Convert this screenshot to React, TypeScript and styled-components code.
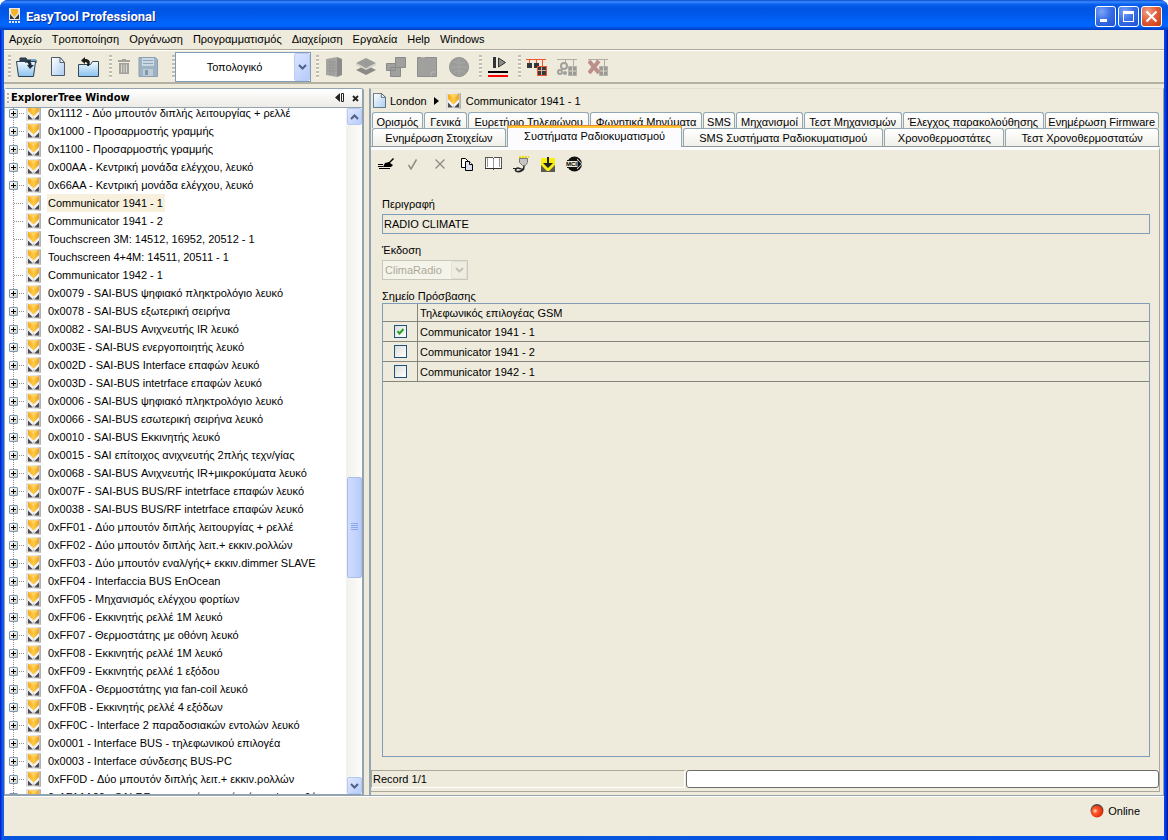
import React from "react";
import styled, { createGlobalStyle, css } from "styled-components";

const face = "#eeebdc";
const steel = "#93a3b0";
const ink = "#000";

const GlobalStyle = createGlobalStyle`
  *, *::before, *::after { box-sizing: border-box; }
  html, body { margin: 0; padding: 0; }
  body, button, input, select, table {
    font-family: "Liberation Sans", "DejaVu Sans Condensed", sans-serif;
    font-size: 11px;
    line-height: 16px;
    color: ${ink};
  }
  button { border: 0; padding: 0; background: none; }
`;

/* ---------- window ---------- */

const Window = styled.div`
  display: flex;
  flex-direction: column;
  height: 100vh;
  min-height: 480px;
  overflow: hidden;
  background: linear-gradient(90deg, #0019cf 0, #0831d9 1px, #166aee 3px, #0855dd 4px, #0855dd 50%, #0050ee calc(100% - 4px), #0831d9 calc(100% - 2px), #00138c 100%);
  border-radius: 8px 8px 0 0;
`;

const TitleBar = styled.header`
  display: flex;
  align-items: center;
  gap: 5px;
  flex: none;
  height: 30px;
  padding: 2px 6px 0 8px;
  background: linear-gradient(180deg, #0a4bd0 0, #3a8cff 2px, #0a62ee 4px, #0054e3 8px, #0058e8 14px, #0064fb 22px, #0066ff 26px, #0050dc 28px, #003cc4 30px);
`;

const Title = styled.h1`
  flex: 1;
  margin: 0;
  padding-top: 2px;
  font: bold 13px/18px Roboto, "Noto Sans", sans-serif;
  color: #fff;
  text-shadow: 1px 1px 0 #0a2a90;
`;

const Caption = styled.div`
  display: flex;
  gap: 2px;
`;

const CaptionButton = styled.button<{ $danger?: boolean }>`
  display: grid;
  place-items: center;
  width: 21px;
  height: 21px;
  border: 1px solid #fff;
  border-radius: 3px;
  background: ${(p) =>
    p.$danger
      ? "radial-gradient(circle at 30% 25%, #f0a088 0, #e2603c 45%, #c8380f 100%)"
      : "radial-gradient(circle at 30% 25%, #7da5f5 0, #3a6fe8 45%, #1c4fd0 100%)"};
`;

const Client = styled.div`
  display: flex;
  flex-direction: column;
  flex: 1;
  min-height: 0;
  margin: 0 4px 4px;
  background: ${face};
`;

/* ---------- menu and main tool bar ---------- */

const MenuBar = styled.nav`
  display: flex;
  flex: none;
  height: 20px;
  padding-left: 5px;
  gap: 10px;
  border-bottom: 1px solid #aca899;
`;

const MenuItem = styled.button`
  height: 18px;
  line-height: 18px;
  white-space: nowrap;
`;

const ToolBar = styled.div`
  display: flex;
  align-items: center;
  flex: none;
  gap: 5px;
  height: 34px;
  padding: 0 4px;
  border-top: 1px solid #fff;
  border-bottom: 2px solid #b4b1a2;
`;

const Group = styled.div<{ $end?: number }>`
  display: flex;
  align-items: center;
  padding-right: ${(p) => p.$end ?? 0}px;
  &::before {
    content: "";
    width: 3px;
    height: 23px;
    background: repeating-linear-gradient(180deg, #c2beae 0, #c2beae 2px, #fbfaf4 2px, #fbfaf4 3px, transparent 3px, transparent 4px);
  }
`;

const ToolButton = styled.button<{ $w?: number }>`
  display: grid;
  place-items: center;
  width: ${(p) => p.$w ?? 31}px;
  height: 26px;
  svg { display: block; }
`;

const ViewPicker = styled.div`
  position: relative;
  width: 136px;
  height: 30px;
`;

const ViewSelect = styled.select`
  appearance: none;
  width: 100%;
  height: 100%;
  padding: 0 17px 0 0;
  border: 1px solid #7f9db9;
  border-radius: 0;
  background: #fff;
  text-align-last: center;
`;

const DropMark = styled.span<{ $off?: boolean }>`
  position: absolute;
  top: 1px;
  right: 1px;
  bottom: 1px;
  width: 16px;
  display: grid;
  place-items: center;
  pointer-events: none;
  border: 1px solid ${(p) => (p.$off ? "#e4e2d6" : "#bccbf6")};
  border-radius: 2px;
  background: ${(p) => (p.$off ? "#efede2" : "linear-gradient(135deg, #dbe5fe, #b6cafb)")};
`;

/* ---------- workspace ---------- */

const Workspace = styled.main`
  display: grid;
  grid-template-columns: 360px minmax(0, 1fr);
  grid-template-rows: minmax(0, 1fr);
  column-gap: 5px;
  flex: 1;
  min-height: 0;
  padding-top: 4px;
  border-bottom: 1px solid ${steel};
`;

const Explorer = styled.section`
  display: flex;
  flex-direction: column;
  min-height: 0;
  border: 1px solid ${steel};
  border-right-width: 2px;
  border-radius: 3px 3px 0 0;
  background: #fff;
`;

const ExplorerHeader = styled.div`
  display: flex;
  align-items: center;
  flex: none;
  gap: 8px;
  height: 19px;
  padding: 0 3px 0 2px;
  border-bottom: 1px solid ${steel};
  background: linear-gradient(180deg, #fff, #ecebe6);
  &::before {
    content: "";
    width: 2px;
    height: 11px;
    margin-right: -6px;
    background: repeating-linear-gradient(180deg, #b5b2a5 0, #b5b2a5 2px, transparent 2px, transparent 4px);
  }
`;

const ExplorerTitle = styled.h2`
  flex: 1;
  margin: 0;
  font: bold 11px/16px "DejaVu Sans Condensed", "Noto Sans", sans-serif;
`;

const ExplorerBody = styled.div`
  display: grid;
  grid-template-columns: minmax(0, 1fr) 16px;
  flex: 1;
  min-height: 0;
`;

const TreeView = styled.div`
  overflow: hidden;
  min-height: 0;
`;

const Tree = styled.ul`
  list-style: none;
  margin: -4px 0 0;
  padding: 0 0 0 4px;
`;

const Node = styled.li`
  display: grid;
  grid-template-columns: 9px 8px 16px 1fr;
  align-items: center;
  height: 18px;
  background: repeating-linear-gradient(180deg, #8c8c8c 0, #8c8c8c 1px, transparent 1px, transparent 2px) 4px 0 / 1px 18px no-repeat;
`;

const Expander = styled.button`
  display: grid;
  place-items: center;
  width: 9px;
  height: 9px;
  border: 1px solid #7898b5;
  border-radius: 1px;
  background: linear-gradient(135deg, #fff, #d2cdbd);
`;

const Twig = styled.span<{ $leaf?: boolean }>`
  height: 1px;
  margin: 0 2px 0 1px;
  background: repeating-linear-gradient(90deg, #8c8c8c 0, #8c8c8c 1px, transparent 1px, transparent 2px);
  ${(p) =>
    p.$leaf &&
    css`
      grid-column: 1 / 3;
      margin-left: 5px;
    `}
`;

const NodeLabel = styled.span<{ $current?: boolean }>`
  justify-self: start;
  margin-left: 5px;
  padding: 1px 2px 1px 1px;
  white-space: nowrap;
  background: ${(p) => (p.$current ? "#f6f0dd" : "transparent")};
`;

const ScrollBar = styled.div`
  display: flex;
  flex-direction: column;
  min-height: 0;
  background: linear-gradient(90deg, #f1f0ea, #fdfdfb);
`;

const ScrollButton = styled.button`
  display: grid;
  place-items: center;
  flex: none;
  width: 15px;
  height: 17px;
  margin-left: 1px;
  border: 1px solid #b4c8f6;
  border-radius: 2px;
  background: linear-gradient(135deg, #dfe8fe, #b9ccfb);
`;

const TrackSpace = styled.div<{ $weight: number }>`
  flex: ${(p) => p.$weight} 1 0;
`;

const Thumb = styled.div`
  display: grid;
  place-items: center;
  flex: 99 1 0;
  min-height: 24px;
  width: 15px;
  margin-left: 1px;
  border: 1px solid #a8bdf0;
  border-radius: 2px;
  background: linear-gradient(90deg, #cfdcfe, #c3d3fd 60%, #b8cbf8);
`;

/* ---------- editor ---------- */

const Editor = styled.section`
  display: flex;
  flex-direction: column;
  min-width: 0;
  min-height: 0;
  border-left: 2px solid ${steel};
  border-top: 1px solid #e2dfd0;
  border-right: 1px solid ${steel};
  padding: 4px 3px 3px 0;
`;

const Crumbs = styled.nav`
  display: flex;
  align-items: center;
  flex: none;
  height: 17px;
  margin-bottom: 2px;
  padding: 0 0 2px 2px;
  gap: 7px;
`;

const Crumb = styled.a`
  display: flex;
  align-items: center;
  gap: 4px;
  color: ${ink};
  text-decoration: none;
`;

const Tabs = styled.div`
  flex: none;
`;

const TabRow = styled.div<{ $front?: boolean }>`
  display: flex;
  align-items: flex-end;
  gap: 1px;
  padding: 0 1px;
  ${(p) =>
    p.$front &&
    css`
      position: relative;
      z-index: 1;
      height: 19px;
      margin-top: -4px;
      border-bottom: 1px solid #919b9c;
      background: ${face};
    `}
`;

const Tab = styled.button<{ $weight: number; $active?: boolean; $back?: boolean }>`
  flex: ${(p) => p.$weight} 1 0;
  min-width: 0;
  height: ${(p) => (p.$back ? 20 : 18)}px;
  padding-bottom: ${(p) => (p.$back ? 2 : 0)}px;
  border: 1px solid #91a7b4;
  border-bottom: 0;
  border-radius: 3px 3px 0 0;
  background: linear-gradient(180deg, #fff, #f0efe8);
  white-space: nowrap;
  overflow: hidden;
  ${(p) =>
    p.$active &&
    css`
      height: 21px;
      margin-bottom: -1px;
      padding-bottom: 4px;
      border-top: 2px solid #ffc73c;
      box-shadow: 0 -1px 0 #e68b2c;
      background: #fcfcfe;
    `}
`;

const Page = styled.div`
  display: flex;
  flex-direction: column;
  flex: 1;
  min-height: 0;
  border-top: 3px solid #fcfcfe;
  border-right: 1px solid #aaa89c;
  border-bottom: 1px solid #aaa89c;
`;

const Actions = styled.div`
  display: flex;
  flex: none;
  height: 27px;
  padding: 1px 0 0 1px;
`;

const Form = styled.form`
  display: flex;
  flex-direction: column;
  flex: 1;
  min-height: 0;
  margin: 17px 9px 13px 11px;
`;

const FieldLabel = styled.label`
  flex: none;
  height: 16px;
  margin-top: 2px;
`;

const TextField = styled.input`
  flex: none;
  width: 100%;
  height: 20px;
  margin: 2px 0 6px;
  padding: 0 1px;
  border: 1px solid #7f9db9;
  background: ${face};
`;

const VersionPicker = styled.div`
  position: relative;
  flex: none;
  width: 86px;
  height: 20px;
  margin: 2px 0 6px;
`;

const VersionSelect = styled.select`
  appearance: none;
  width: 100%;
  height: 100%;
  padding: 0 2px;
  border: 1px solid #c9c7ba;
  border-radius: 0;
  background: #f5f4ea;
  color: #aca899;
  opacity: 1;
`;

const GridFrame = styled.div`
  flex: 1;
  min-height: 0;
  margin-top: -1px;
  border: 1px solid #7f9db9;
`;

const Grid = styled.table`
  width: 100%;
  border-spacing: 0;
  table-layout: fixed;
  th, td {
    height: 20px;
    padding: 0 2px;
    border-bottom: 1px solid #85857f;
    text-align: left;
    font-weight: normal;
  }
  th { height: 18px; }
  th:first-child, td:first-child {
    width: 35px;
    border-right: 1px solid #85857f;
  }
`;

const Tick = styled.label`
  position: relative;
  display: block;
  width: 13px;
  height: 13px;
  margin: 0 auto;
  input {
    appearance: none;
    display: block;
    width: 13px;
    height: 13px;
    margin: 0;
    border: 1px solid #1d5281;
    background: linear-gradient(135deg, #dcdcd7, #fff);
  }
  svg {
    position: absolute;
    top: 3px;
    left: 3px;
    display: none;
    pointer-events: none;
  }
  input:checked + svg { display: block; }
`;

const RecordBar = styled.div`
  display: grid;
  grid-template-columns: 314px minmax(0, 1fr);
  gap: 1px;
  flex: none;
  height: 18px;
  margin-bottom: 3px;
`;

const RecordCount = styled.output`
  border: 1px solid #aca899;
  border-right-color: #fff;
  border-bottom-color: #fff;
  padding-left: 1px;
`;

const Progress = styled.div`
  border: 1px solid #6d6d6d;
  border-radius: 3px;
  background: #fff;
`;

const StatusBar = styled.footer`
  display: flex;
  align-items: center;
  justify-content: flex-end;
  gap: 4px;
  flex: none;
  height: 40px;
  padding: 0 24px 11px 0;
  border-top: 1px solid #fff;
`;

/* ---------- drawings ---------- */

const Chevron = ({ up, color = "#4d6185" }: { up?: boolean; color?: string }) => (
  <svg width="9" height="6" viewBox="0 0 9 6" fill="none" stroke={color} strokeWidth="2">
    <path d={up ? "M1 5 4.500 1.500 8 5" : "M1 1 4.500 4.500 8 1"} />
  </svg>
);

const Device = () => (
  <svg width="16" height="16" viewBox="0 0 16 16">
    <rect width="15" height="16" rx="1" fill="url(#plate)" />
    <path d="M2 6l5.500 6L13 6v8H2z" fill="#f4f4f4" />
    <path d="M2 9.500v5h5zM13 9.500v5H8z" fill="#4a4b50" />
    <path d="M5.500 14.500l2-2.500 2 2.500z" fill="#c9c9cb" />
    <path d="M2 1h11v5l-5.500 5.500L2 6z" fill="url(#amber)" />
    <path d="M2 1l5.500 4L13 1z" fill="#ffe08a" opacity=".5" />
  </svg>
);

const Sheet = ({ w = 14, h = 19 }: { w?: number; h?: number }) => (
  <svg width={w} height={h} viewBox="0 0 14 19" preserveAspectRatio="none">
    <path d="M.5.5h8.500l4.500 5v13H.5z" fill="url(#paper)" stroke="#4c5c6c" />
    <path d="M9 .5v5h4.500z" fill="#fff" stroke="#4c5c6c" />
  </svg>
);

const DefsHost = styled.svg`
  position: absolute;
`;

const Defs = () => (
  <DefsHost width="0" height="0" aria-hidden="true">
    <defs>
      <linearGradient id="plate" x1="0" x2="1">
        <stop offset="0" stopColor="#d2d2d2" />
        <stop offset=".2" stopColor="#f1f1f1" />
        <stop offset=".8" stopColor="#dcdcdc" />
        <stop offset="1" stopColor="#a8a8a8" />
      </linearGradient>
      <linearGradient id="amber" x1="0" x2="1">
        <stop offset="0" stopColor="#f6a81c" />
        <stop offset=".5" stopColor="#ffcb45" />
        <stop offset="1" stopColor="#f0a41c" />
      </linearGradient>
      <linearGradient id="paper" x1="0" y1="0" x2="1" y2="1">
        <stop offset="0" stopColor="#fff" />
        <stop offset="1" stopColor="#a9cdf0" />
      </linearGradient>
      <linearGradient id="folder" x1="0" y1="0" x2="0" y2="1">
        <stop offset="0" stopColor="#f2f9ff" />
        <stop offset="1" stopColor="#8bc2ee" />
      </linearGradient>
      <radialGradient id="lamp" cx=".35" cy=".45" r=".7">
        <stop offset="0" stopColor="#ffe3da" />
        <stop offset=".3" stopColor="#ff5a2a" />
        <stop offset="1" stopColor="#e02000" />
      </radialGradient>
    </defs>
  </DefsHost>
);

const OpenProject = () => (
  <svg width="21" height="20" viewBox="0 0 21 20">
    <path d="M4 5V1h6l1 2h9v3" fill="#2e4256" stroke="#26384a" />
    <path d="M.5 4.500h19l-2 15H2.500z" fill="url(#folder)" stroke="#2c3e50" />
    <path d="M9 4.500c4-1 7 0 6.500 3.500H18l-4 4-3-4h1.500c0-2-1-3-3.500-2z" fill="#1d2a38" />
    <path d="M15 2h5v2h-5z" fill="#6ea6d4" />
  </svg>
);

const ImportFolder = () => (
  <svg width="21" height="20" viewBox="0 0 21 20">
    <path d="M.5 7.500h12l2-3h6v15H.5z" fill="url(#folder)" stroke="#34485a" />
    <path d="M3 3.500L7 0v2c4 0 6 2 4 7H9c1-2.500 0-4-2-4v2z" fill="#1c1c1c" />
  </svg>
);

const Trash = () => (
  <svg width="12" height="15" viewBox="0 0 12 15" fill="#a3a19b">
    <path d="M4 0h4v1h4v2H0V1h4zM1 4h10v11H1z" />
    <path d="M3.500 5.500v8M6 5.500v8M8.500 5.500v8" stroke="#dedbd0" />
  </svg>
);

const Floppy = () => (
  <svg width="20" height="20" viewBox="0 0 20 20">
    <path d="M1 .5h16.500l2 2v17H1z" fill="#9db2c4" stroke="#8ba0b3" />
    <path d="M4 1h12v8H4z" fill="#ccd8e1" />
    <path d="M5 3.500h10M5 6.500h10" stroke="#8fa6b9" />
    <path d="M5 12h10v7H5z" fill="#bfccd6" />
    <path d="M7 13h3v5H7z" fill="#8096a9" />
  </svg>
);

const Building = () => (
  <svg width="17" height="20" viewBox="0 0 17 20">
    <path d="M0 2 11 0v20L0 18z" fill="#a5a5a3" />
    <path d="M11 0l5 2v16l-5 2z" fill="#8b8b89" />
    <path d="M1 5h9M1 8h9M1 11h9M1 14h9M4 3v15M7 3v15" stroke="#969694" />
  </svg>
);

const Layers = () => (
  <svg width="20" height="17" viewBox="0 0 20 17">
    <path d="M0 12l10-5 10 5-10 5z" fill="#8a8a88" />
    <path d="M0 5l10-5 10 5-10 5z" fill="#9b9b99" />
    <path d="M0 5l10 5 10-5v2l-10 5L0 7z" fill="#d4d2c6" />
  </svg>
);

const Rooms = () => (
  <svg width="21" height="20" viewBox="0 0 21 20" fill="#a0a09e" stroke="#8a8a88">
    <path d="M9.500.5h10v10h-10zM.5 6.500h9v7h-9zM4.500 10.500h10v9h-10z" />
  </svg>
);

const Plan = () => (
  <svg width="21" height="20" viewBox="0 0 21 20" fill="#a0a09e" stroke="#8e8e8c">
    <path d="M.5.5h19v19H.5z" />
    <path d="M14 19v-4h5M4 .5h4" stroke="#b8b7ae" fill="none" />
  </svg>
);

const Globe = () => (
  <svg width="20" height="20" viewBox="0 0 20 20" fill="#9c9c9a" stroke="#90908e">
    <circle cx="10" cy="10" r="9.500" />
    <path d="M10 1v18M1 10h18M4 4c4 3 8 3 12 0M4 16c4-3 8-3 12 0" fill="none" stroke="#a8a8a4" />
  </svg>
);

const StepOver = () => (
  <svg width="20" height="20" viewBox="0 0 20 20" shapeRendering="crispEdges">
    <path d="M5 0h3v11H5z" fill="#333" />
    <path d="M10.500 1v9l7-4.500z" fill="#8a8a88" stroke="#333" shapeRendering="auto" />
    <path d="M0 14h20v2H0z" fill="#000" />
    <path d="M0 18h20v2H0z" fill="#f00" />
  </svg>
);

const Network = () => (
  <svg width="21" height="18" viewBox="0 0 21 18" shapeRendering="crispEdges">
    <path d="M0 1h20v1H0zM3 2h1v4H3zM10 2h1v4h-1zM16 2h1v6h-1z" fill="#f0562a" />
    <path d="M1 5h5v5H1zM8 5h5v5H8z" fill="#33363a" />
    <path d="M11 8h10v10H11z" fill="#f0562a" />
    <path d="M12 9h8v8h-8z" fill="#d8b0a0" />
    <path d="M12 9h3v3h-3zM16 9h4v3h-4zM12 13h3v4h-3zM16 13h4v4h-4z" fill="#3a3a3c" />
  </svg>
);

const NetworkOff = ({ cross }: { cross?: boolean }) => (
  <svg width="21" height="18" viewBox="0 0 21 18">
    <path d="M0 1.500h20M16.500 2v6M8.500 2v4" stroke="#aeaca4" />
    <path d="M11.500 8.500h8v9h-8z" fill="#9a9994" stroke="#b4b2aa" />
    <path d="M15.500 9v8M12 13h7" stroke="#d9d6ca" />
    {cross ? (
      <path d="M1 3l10 12M11 3L1 15" stroke="#bd8f8b" strokeWidth="4" />
    ) : (
      <g fill="none" stroke="#a09f99" strokeWidth="2">
        <circle cx="7" cy="8" r="3" />
        <circle cx="3" cy="14" r="2" />
        <circle cx="8" cy="15" r="1" />
      </g>
    )}
  </svg>
);

const MciMark = styled.text`
  font: bold 6px "Liberation Sans", sans-serif;
`;

const actionIcons: { name: string; art: React.ReactNode }[] = [
  {
    name: "Επεξεργασία",
    art: (
      <svg width="16" height="12" viewBox="0 0 16 12">
        <path d="M0 6.500h5M0 8.500h5M1 10.500h11" stroke="#000" />
        <path d="M5 9l2-4 4-1 4-4 1 1-4 4 3 2-2 2H8z" fill="#000" />
      </svg>
    ),
  },
  {
    name: "Αποδοχή",
    art: (
      <svg width="9" height="11" viewBox="0 0 9 11" fill="none" stroke="#8e8c82" strokeWidth="1.500">
        <path d="M.5 6l2.500 4L8.500.5" />
      </svg>
    ),
  },
  {
    name: "Ακύρωση",
    art: (
      <svg width="10" height="10" viewBox="0 0 10 10" fill="none" stroke="#8e8c82" strokeWidth="1.300">
        <path d="M.5.5l9 9M9.500.5l-9 9" />
      </svg>
    ),
  },
  {
    name: "Αντιγραφή",
    art: (
      <svg width="12" height="13" viewBox="0 0 12 13" fill="#fff" stroke="#000">
        <path d="M.5.5h4l3 3v6h-7z" />
        <path d="M4.500 3.500h4l3 3v6h-7z" fill="#dcdcf0" />
        <path d="M8.500 3.500v3h3" />
      </svg>
    ),
  },
  {
    name: "Βιβλίο",
    art: (
      <svg width="17" height="14" viewBox="0 0 17 14" fill="#fff" stroke="#555" shapeRendering="crispEdges">
        <path d="M.5.5h7l1 1 1-1h7v11h-7l-1 1-1-1h-7z" />
        <path d="M8.500 1.500v10M2.500 1v9M14.500 1v9" stroke="#999" fill="none" />
        <path d="M0 11.500h17" stroke="#333" />
      </svg>
    ),
  },
  {
    name: "Σύνδεση",
    art: (
      <svg width="16" height="17" viewBox="0 0 16 17" fill="none">
        <path d="M6 1h10" stroke="#e8d800" strokeWidth="2" strokeDasharray="2 1" />
        <path d="M6.500 2.500h8v4l-2 3h-3l-3-3z" fill="#c4c4c4" stroke="#777" />
        <path d="M11 10c0 6-4 2-6 2s-4 3-1 3.500 5 0 7-3" stroke="#222" strokeWidth="1.500" />
        <path d="M0 12.500h4" stroke="#222" />
      </svg>
    ),
  },
  {
    name: "Λήψη",
    art: (
      <svg width="14" height="15" viewBox="0 0 14 15">
        <path d="M0 1h14v8l-7 6-7-6z" fill="#f7ee10" />
        <path d="M0 8l6 6h2l6-6v7H0z" fill="#5a5a52" />
        <path d="M6 0h2v6h4l-5 5-5-5h4z" fill="#222" />
      </svg>
    ),
  },
  {
    name: "MCI",
    art: (
      <svg width="17" height="16" viewBox="0 0 17 16">
        <circle cx="8.500" cy="8" r="7.500" fill="#111" />
        <path d="M0 4h11V2.500L16.500 8 11 13.500V12H0z" fill={face} />
        <path d="M11.500 4L15.500 8l-4 4z" fill="#111" />
        <path d="M1 4.500h10.500M1 11.500h10.500" stroke="#111" />
        <MciMark x="0" y="10">MCI</MciMark>
      </svg>
    ),
  },
];

/* ---------- data ---------- */

const menus = ["Αρχείο", "Τροποποίηση", "Οργάνωση", "Προγραμματισμός", "Διαχείριση", "Εργαλεία", "Help", "Windows"];

const nodes = [
  "0x1112 - Δύο μπουτόν διπλής λειτουργίας + ρελλέ",
  "0x1000 - Προσαρμοστής γραμμής",
  "0x1100 - Προσαρμοστής γραμμής",
  "0x00AA - Κεντρική μονάδα ελέγχου, λευκό",
  "0x66AA - Κεντρική μονάδα ελέγχου, λευκό",
  "Communicator 1941 - 1",
  "Communicator 1941 - 2",
  "Touchscreen 3M: 14512, 16952, 20512 - 1",
  "Touchscreen 4+4M: 14511, 20511 - 1",
  "Communicator 1942 - 1",
  "0x0079 - SAI-BUS ψηφιακό πληκτρολόγιο λευκό",
  "0x0078 - SAI-BUS εξωτερική σειρήνα",
  "0x0082 - SAI-BUS Ανιχνευτής IR λευκό",
  "0x003E - SAI-BUS ενεργοποιητής λευκό",
  "0x002D - SAI-BUS Interface επαφών λευκό",
  "0x003D - SAI-BUS intetrface επαφών λευκό",
  "0x0006 - SAI-BUS ψηφιακό πληκτρολόγιο λευκό",
  "0x0066 - SAI-BUS εσωτερική σειρήνα λευκό",
  "0x0010 - SAI-BUS Εκκινητής λευκό",
  "0x0015 - SAI επίτοιχος ανιχνευτής 2πλής τεχν/γίας",
  "0x0068 - SAI-BUS Ανιχνευτής IR+μικροκύματα λευκό",
  "0x007F - SAI-BUS BUS/RF intetrface επαφών λευκό",
  "0x0038 - SAI-BUS BUS/RF intetrface επαφών λευκό",
  "0xFF01 - Δύο μπουτόν διπλής λειτουργίας + ρελλέ",
  "0xFF02 - Δύο μπουτόν διπλής λειτ.+ εκκιν.ρολλών",
  "0xFF03 - Δύο μπουτόν εναλ/γής+ εκκιν.dimmer SLAVE",
  "0xFF04 - Interfaccia BUS EnOcean",
  "0xFF05 - Μηχανισμός ελέγχου φορτίων",
  "0xFF06 - Εκκινητής ρελλέ 1M λευκό",
  "0xFF07 - Θερμοστάτης με οθόνη λευκό",
  "0xFF08 - Εκκινητής ρελλέ 1M λευκό",
  "0xFF09 - Εκκινητής ρελλέ 1 εξόδου",
  "0xFF0A - Θερμοστάτης για fan-coil λευκό",
  "0xFF0B - Εκκινητής ρελλέ 4 εξόδων",
  "0xFF0C - Interface 2 παραδοσιακών εντολών λευκό",
  "0x0001 - Interface BUS - τηλεφωνικού επιλογέα",
  "0x0003 - Interface σύνδεσης BUS-PC",
  "0xFF0D - Δύο μπουτόν διπλής λειτ.+ εκκιν.ρολλών",
  "0x1FA1A00 - SAI RF μαγνητική επαφή πόρτας/παραθύρου",
];

const backTabs: [string, number][] = [
  ["Ορισμός", 50],
  ["Γενικά", 42],
  ["Ευρετήριο Τηλεφώνου", 122],
  ["Φωνητικά Μηνύματα", 112],
  ["SMS", 31],
  ["Μηχανισμοί", 66],
  ["Τεστ Μηχανισμών", 98],
  ["Έλεγχος παρακολούθησης", 142],
  ["Ενημέρωση Firmware", 115],
];

const frontTabs: [string, number][] = [
  ["Ενημέρωση Στοιχείων", 134],
  ["Συστήματα Ραδιοκυματισμού", 176],
  ["SMS Συστήματα Ραδιοκυματισμού", 201],
  ["Χρονοθερμοστάτες", 120],
  ["Τεστ Χρονοθερμοστατών", 154],
];

const accessPoints = [
  { name: "Communicator 1941 - 1", on: true },
  { name: "Communicator 1941 - 2", on: false },
  { name: "Communicator 1942 - 1", on: false },
];

export default function App() {
  return (
    <Window>
      <GlobalStyle />
      <Defs />
      <TitleBar>
        <svg width="13" height="16" viewBox="0 0 13 16">
          <path d="M1 0h11v12H1z" fill="#e9e9e9" />
          <path d="M3 1h7v4L6.500 9 3 5z" fill="#f3b32c" />
          <path d="M2 6l4.500 5L11 6v5H2z" fill="#3a3a3a" />
          <path d="M1 14h11" stroke="#dfe8ff" strokeWidth="2" strokeDasharray="2 1" />
        </svg>
        <Title>EasyTool Professional</Title>
        <Caption>
          <CaptionButton aria-label="Minimize">
            <svg width="13" height="13" viewBox="0 0 13 13"><path d="M1 9h7v3H1z" fill="#fff" /></svg>
          </CaptionButton>
          <CaptionButton aria-label="Maximize">
            <svg width="13" height="13" viewBox="0 0 13 13"><path d="M1 1h11v11H1zM2 4v7h9V4z" fill="#fff" fillRule="evenodd" /></svg>
          </CaptionButton>
          <CaptionButton $danger aria-label="Close">
            <svg width="13" height="13" viewBox="0 0 13 13"><path d="M1.500 1.500l10 10M11.500 1.500l-10 10" stroke="#fff" strokeWidth="2.200" /></svg>
          </CaptionButton>
        </Caption>
      </TitleBar>

      <Client>
        <MenuBar>
          {menus.map((m) => (
            <MenuItem key={m}>{m}</MenuItem>
          ))}
        </MenuBar>

        <ToolBar>
          <Group>
            <ToolButton aria-label="Open project"><OpenProject /></ToolButton>
            <ToolButton aria-label="New"><Sheet /></ToolButton>
            <ToolButton aria-label="Import"><ImportFolder /></ToolButton>
          </Group>
          <Group $end={7}>
            <ToolButton $w={24} disabled aria-label="Delete"><Trash /></ToolButton>
            <ToolButton $w={24} disabled aria-label="Save"><Floppy /></ToolButton>
          </Group>
          <Group>
            <ViewPicker>
              <ViewSelect aria-label="View" defaultValue="topo">
                <option value="topo">Τοπολογικό</option>
              </ViewSelect>
              <DropMark><Chevron /></DropMark>
            </ViewPicker>
          </Group>
          <Group>
            <ToolButton disabled aria-label="Building"><Building /></ToolButton>
            <ToolButton disabled aria-label="Floor"><Layers /></ToolButton>
            <ToolButton disabled aria-label="Rooms"><Rooms /></ToolButton>
            <ToolButton disabled aria-label="Plan"><Plan /></ToolButton>
            <ToolButton disabled aria-label="Area"><Globe /></ToolButton>
          </Group>
          <Group>
            <ToolButton aria-label="Step"><StepOver /></ToolButton>
          </Group>
          <Group>
            <ToolButton aria-label="Network"><Network /></ToolButton>
            <ToolButton disabled aria-label="Configure network"><NetworkOff /></ToolButton>
            <ToolButton disabled aria-label="Remove network"><NetworkOff cross /></ToolButton>
          </Group>
        </ToolBar>

        <Workspace>
          <Explorer>
            <ExplorerHeader>
              <ExplorerTitle>ExplorerTree Window</ExplorerTitle>
              <button aria-label="Auto hide">
                <svg width="9" height="9" viewBox="0 0 9 9"><path d="M5 0v9L0 4.500z" fill="#222" /><path d="M6.500.5h2v8h-2z" fill="none" stroke="#222" /></svg>
              </button>
              <button aria-label="Close panel">
                <svg width="7" height="7" viewBox="0 0 7 7"><path d="M1 1l5 5M6 1L1 6" stroke="#222" strokeWidth="1.800" /></svg>
              </button>
            </ExplorerHeader>
            <ExplorerBody>
              <TreeView>
                <Tree>
                  {nodes.map((n) => {
                    const leaf = !n.startsWith("0x");
                    return (
                      <Node key={n}>
                        {!leaf && (
                          <Expander aria-label="Expand">
                            <svg width="5" height="5" viewBox="0 0 5 5"><path d="M2 0h1v5H2zM0 2h5v1H0z" /></svg>
                          </Expander>
                        )}
                        <Twig $leaf={leaf} />
                        <Device />
                        <NodeLabel $current={n === "Communicator 1941 - 1"}>{n}</NodeLabel>
                      </Node>
                    );
                  })}
                </Tree>
              </TreeView>
              <ScrollBar>
                <ScrollButton aria-label="Scroll up"><Chevron up /></ScrollButton>
                <TrackSpace $weight={353} />
                <Thumb>
                  <svg width="7" height="8" viewBox="0 0 7 8"><path d="M0 .5h7M0 2.500h7M0 4.500h7M0 6.500h7" stroke="#8aa8f0" /></svg>
                </Thumb>
                <TrackSpace $weight={200} />
                <ScrollButton aria-label="Scroll down"><Chevron /></ScrollButton>
              </ScrollBar>
            </ExplorerBody>
          </Explorer>

          <Editor>
            <Crumbs>
              <Crumb href="#london"><Sheet w={13} h={15} />London</Crumb>
              <svg width="5" height="8" viewBox="0 0 5 8"><path d="M0 0l5 4-5 4z" /></svg>
              <Crumb href="#communicator"><Device />Communicator 1941 - 1</Crumb>
            </Crumbs>

            <Tabs role="tablist">
              <TabRow>
                {backTabs.map(([t, w]) => (
                  <Tab key={t} role="tab" $back $weight={w}>{t}</Tab>
                ))}
              </TabRow>
              <TabRow $front>
                {frontTabs.map(([t, w], i) => (
                  <Tab key={t} role="tab" aria-selected={i === 1} $active={i === 1} $weight={w}>{t}</Tab>
                ))}
              </TabRow>
            </Tabs>

            <Page>
              <Actions>
                {actionIcons.map((a) => (
                  <ToolButton key={a.name} type="button" $w={27} aria-label={a.name}>{a.art}</ToolButton>
                ))}
              </Actions>
              <Form>
                <FieldLabel htmlFor="description">Περιγραφή</FieldLabel>
                <TextField id="description" defaultValue="RADIO CLIMATE" />
                <FieldLabel htmlFor="version">Έκδοση</FieldLabel>
                <VersionPicker>
                  <VersionSelect id="version" disabled defaultValue="clima">
                    <option value="clima">ClimaRadio</option>
                  </VersionSelect>
                  <DropMark $off><Chevron color="#c4c2b4" /></DropMark>
                </VersionPicker>
                <FieldLabel as="div" id="access">Σημείο Πρόσβασης</FieldLabel>
                <GridFrame>
                  <Grid aria-labelledby="access">
                    <thead>
                      <tr>
                        <th />
                        <th>Τηλεφωνικός επιλογέας GSM</th>
                      </tr>
                    </thead>
                    <tbody>
                      {accessPoints.map((p) => (
                        <tr key={p.name}>
                          <td>
                            <Tick>
                              <input type="checkbox" aria-label={p.name} defaultChecked={p.on} />
                              <svg width="7" height="7" viewBox="0 0 7 7"><path d="M.5 3l2 2.500L6.500 1" fill="none" stroke="#21a121" strokeWidth="2" /></svg>
                            </Tick>
                          </td>
                          <td>{p.name}</td>
                        </tr>
                      ))}
                    </tbody>
                  </Grid>
                </GridFrame>
              </Form>
              <RecordBar>
                <RecordCount>Record 1/1</RecordCount>
                <Progress />
              </RecordBar>
            </Page>
          </Editor>
        </Workspace>

        <StatusBar>
          <svg width="14" height="14" viewBox="0 0 14 14">
            <circle cx="7" cy="6.500" r="6.500" fill="#4a4a4a" />
            <circle cx="7" cy="7.500" r="6" fill="url(#lamp)" />
          </svg>
          Online
        </StatusBar>
      </Client>
    </Window>
  );
}
